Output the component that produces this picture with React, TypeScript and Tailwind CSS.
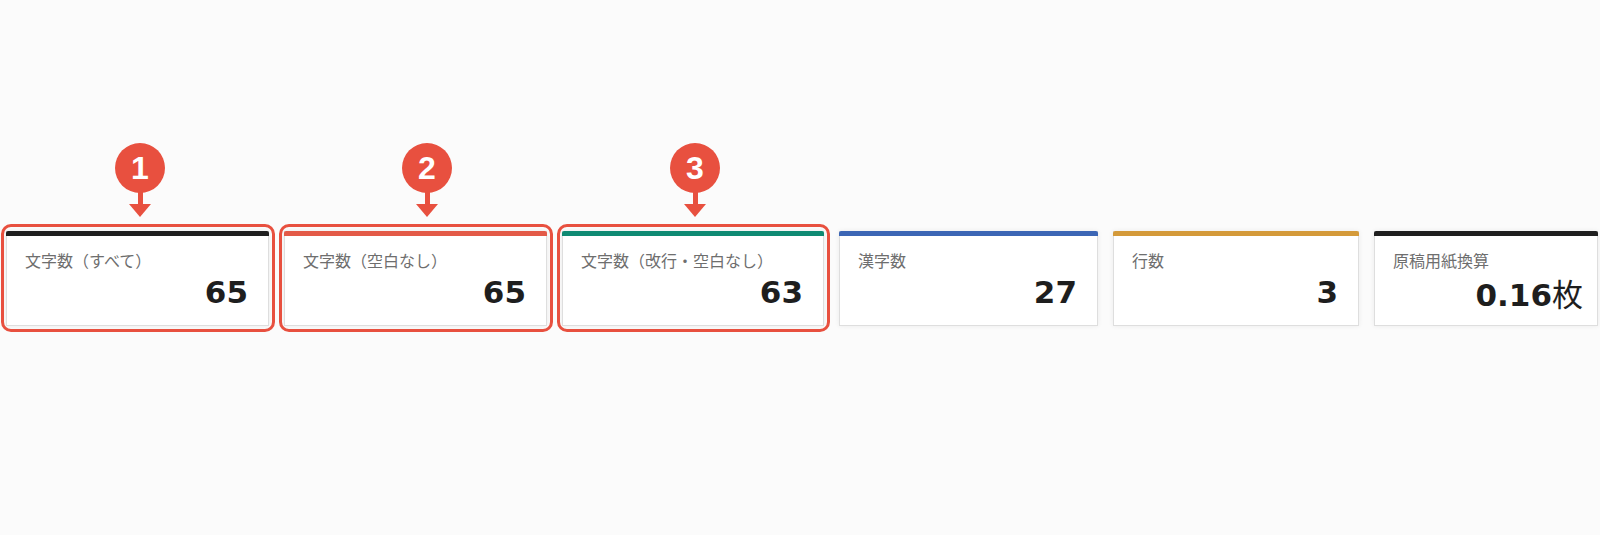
const stats = [
  { label: '文字数（すべて）', value: '65', bar: 'bg-[#1f1f1f]', width: 'w-[263px]', pad: 'pr-[20px]', mark: { n: '1', left: 'left-[109px]' } },
  { label: '文字数（空白なし）', value: '65', bar: 'bg-[#e35a48]', width: 'w-[263px]', pad: 'pr-[20px]', mark: { n: '2', left: 'left-[118px]' } },
  { label: '文字数（改行・空白なし）', value: '63', bar: 'bg-[#0f8a73]', width: 'w-[262px]', pad: 'pr-[20px]', mark: { n: '3', left: 'left-[108px]' } },
  { label: '漢字数', value: '27', bar: 'bg-[#3c66b5]', width: 'w-[259px]', pad: 'pr-[20px]' },
  { label: '行数', value: '3', bar: 'bg-[#d49a3a]', width: 'w-[246px]', pad: 'pr-[20px]' },
  { label: '原稿用紙換算', value: '0.16', unit: '枚', bar: 'bg-[#1f1f1f]', width: 'flex-1', pad: 'pr-[14px]' },
]

function Marker({ n, left }: { n: string; left: string }) {
  return (
    <div className={`absolute -top-[88px] ${left} flex flex-col items-center`}>
      <div className="w-[50px] h-[50px] rounded-full bg-[#e8503f] flex items-center justify-center">
        <span className="text-white text-[32px] font-bold leading-none font-['Liberation_Sans',Arial,sans-serif]">{n}</span>
      </div>
      <div className="w-[5px] h-[12px] bg-[#e8503f] -mt-[1px]" />
      <svg width="22" height="13" viewBox="0 0 22 13">
        <path d="M0 0 H22 L11 13 Z" fill="#e8503f" />
      </svg>
    </div>
  )
}

export default function App() {
  return (
    <div className="w-[1600px] h-[535px] overflow-hidden bg-[#fbfbfb]">
      <div className="flex gap-[15px] pl-[6px] pr-[2px] pt-[231px]">
        {stats.map((s, i) => (
          <div key={i} className={`relative ${s.width} shrink-0`}>
            {s.mark && (
              <>
                <div className="absolute -top-[7px] -bottom-[6px] -left-[5px] -right-[6px] rounded-[10px] border-[3px] border-[#e8503f]" />
                <Marker n={s.mark.n} left={s.mark.left} />
              </>
            )}
            <div className="bg-white border-x border-b border-[#dedede] shadow-[0_0_5px_rgba(0,0,0,0.07)] h-[95px] flex flex-col">
              <div className={`h-[5px] -mx-[1px] rounded-t-[2px] ${s.bar}`} />
              <div className="pl-[18px] pt-[14px] text-[16px] leading-[21px] text-[#6e6e6e] font-['Noto_Sans_CJK_JP',sans-serif]">
                {s.label}
              </div>
              <div className={`mt-[3px] ${s.pad} text-right text-[31px] leading-[37px] font-bold text-[#1e1e1e] font-['DejaVu_Sans','Noto_Sans_CJK_JP',sans-serif]`}>
                {s.value}
                {s.unit && <span className="font-normal font-['Noto_Sans_CJK_JP',sans-serif]">{s.unit}</span>}
              </div>
            </div>
          </div>
        ))}
      </div>
    </div>
  )
}
